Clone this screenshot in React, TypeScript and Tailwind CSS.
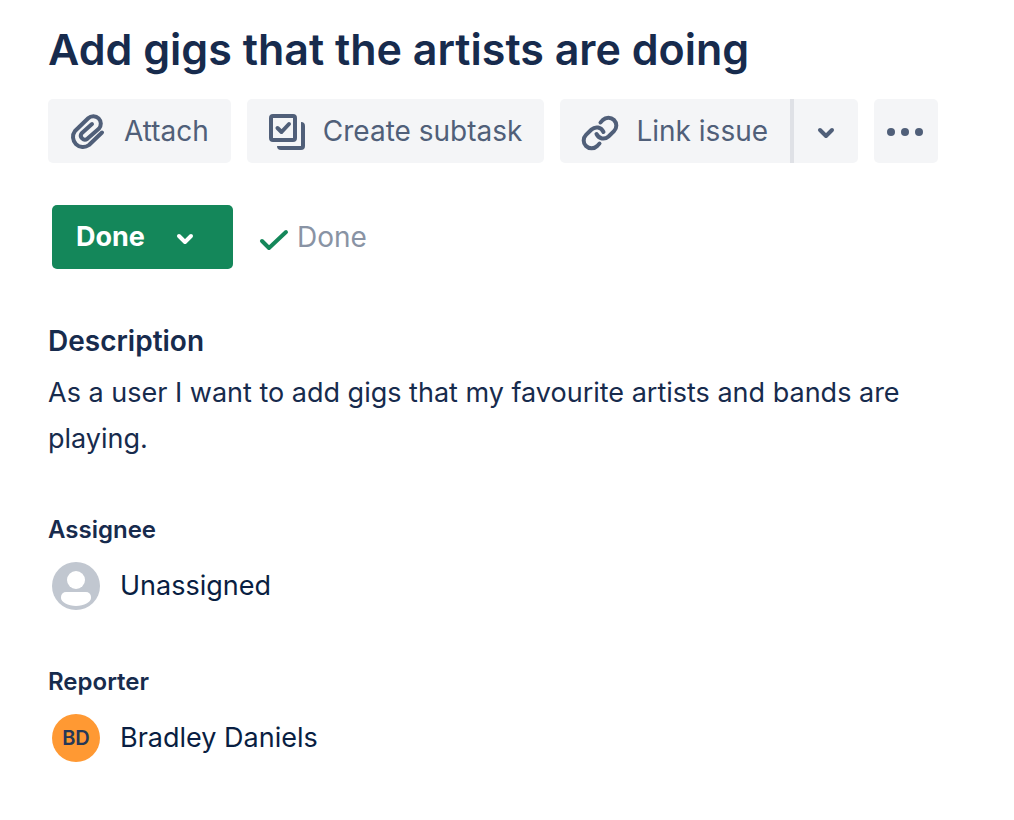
import React from "react";

function Chevron() {
  return (
    <svg className="shrink-0" width="24" height="24" viewBox="0 0 24 24" fill="none" stroke="currentColor" strokeWidth="4" strokeLinecap="round" strokeLinejoin="round" aria-hidden="true">
      <path d="M6 11l6 6 6-6" />
    </svg>
  );
}

function AttachIcon() {
  return (
    <svg className="shrink-0" width="40" height="40" viewBox="0 0 40 40" fill="none" stroke="currentColor" strokeWidth="4" strokeLinecap="round" strokeLinejoin="round" aria-hidden="true">
      <path d="M34 21.5 21 34A10 10 0 0 1 7 20L20.200 7.200A7.500 7.500 0 0 1 30.800 17.800L19.300 27.800A4 4 0 0 1 13.700 22.200L24 13" />
    </svg>
  );
}

function SubtaskIcon() {
  return (
    <svg className="shrink-0" width="40" height="40" viewBox="0 0 40 40" fill="none" stroke="currentColor" strokeWidth="4" strokeLinejoin="round" aria-hidden="true">
      <rect x="4" y="5" width="24" height="24" rx="2" />
      <path d="m10.500 17 4 4 7.500-8" strokeLinecap="round" />
      <path d="M34 11a4 4 0 0 1 4 4v20a4 4 0 0 1-4 4H14a4 4 0 0 1-4-4h24z" fill="currentColor" stroke="none" />
    </svg>
  );
}

function LinkIcon() {
  return (
    <svg className="shrink-0" width="40" height="40" viewBox="0 0 40 40" fill="none" stroke="currentColor" strokeWidth="4" strokeLinecap="round" strokeLinejoin="round" aria-hidden="true">
      <path d="M20.500 11.500l2.300-2.500a7.800 7.800 0 0 1 11.200 11.200l-5.500 5.300c-4 3.500-9.500 2.500-12-2.500" />
      <path d="M19.500 32.500l-2.300 2.500a7.800 7.800 0 0 1-11.200-11.200l5.500-5.300c4-3.500 9.500-2.500 12 2.500" />
    </svg>
  );
}

function MoreIcon() {
  return (
    <svg width="40" height="40" viewBox="0 0 40 40" fill="currentColor" aria-hidden="true">
      <circle cx="5" cy="21" r="4" />
      <circle cx="19" cy="21" r="4" />
      <circle cx="33" cy="21" r="4" />
    </svg>
  );
}

function PersonAvatar() {
  return (
    <svg className="shrink-0" width="48" height="48" viewBox="0 0 48 48" aria-hidden="true">
      <circle cx="24" cy="24" r="24" fill="#c1c7d0" />
      <circle cx="24" cy="18" r="9" fill="#fff" />
      <path d="M14 30h20a5 5 0 0 1 5 5v1c0 4-7 8-15 8S9 40 9 36v-1a5 5 0 0 1 5-5z" fill="#fff" />
    </svg>
  );
}

const tool = "flex h-16 items-center bg-[#f4f5f7] text-[28px] text-[#505f79] hover:bg-[#ebecf0]";
const labelled = "gap-4 pl-5 pr-[22px]";

function Person({ role, name, avatar }: { role: string; name: string; avatar: React.ReactNode }) {
  return (
    <section className="mt-[52px]">
      <h2 className="text-[24px] leading-8 font-semibold">{role}</h2>
      <div className="mt-3 flex h-14 items-center gap-5 pl-1 text-[27px] text-[#091e42]">
        {avatar}
        <span>{name}</span>
      </div>
    </section>
  );
}

export default function App() {
  return (
    <main className="min-h-screen bg-white px-12 pt-6 pb-12 font-['Inter',sans-serif] text-[#172b4d]">
      <h1 className="text-[43px] leading-[50px] font-semibold">Add gigs that the artists are doing</h1>
      <div className="mt-[25px] flex flex-wrap gap-4">
        <button type="button" className={`${tool} ${labelled} rounded-[5px]`}>
          <AttachIcon />
          Attach
        </button>
        <button type="button" className={`${tool} ${labelled} rounded-[5px]`}>
          <SubtaskIcon />
          Create subtask
        </button>
        <div className="flex">
          <button type="button" className={`${tool} ${labelled} rounded-l-[5px]`}>
            <LinkIcon />
            Link issue
          </button>
          <button type="button" aria-label="More link options" className={`${tool} rounded-r-[5px] border-l-4 border-[#dfe1e6] px-5`}>
            <Chevron />
          </button>
        </div>
        <button type="button" aria-label="More actions" className={`${tool} rounded-[5px] px-3`}>
          <MoreIcon />
        </button>
      </div>
      <div className="mt-[42px] flex items-center gap-6 pl-1">
        <button type="button" className="flex h-16 items-center gap-7 rounded-[5px] bg-[#14875a] pr-9 pl-6 text-[27px] font-bold text-white">
          Done
          <Chevron />
        </button>
        <span className="flex items-center gap-2 text-[28px] text-[#8993a4]">
          <svg width="32" height="32" viewBox="0 0 32 32" fill="none" stroke="#14875a" strokeWidth="4" strokeLinecap="round" strokeLinejoin="round" aria-hidden="true">
            <path d="m5 20 7 7L29 11" />
          </svg>
          Done
        </span>
      </div>
      <section className="mt-14">
        <h2 className="text-[28px] leading-8 font-semibold">Description</h2>
        <p className="mt-[13px] text-[27px] leading-[46px]">As a user I want to add gigs that my favourite artists and bands are playing.</p>
      </section>
      <Person role="Assignee" name="Unassigned" avatar={<PersonAvatar />} />
      <Person
        role="Reporter"
        name="Bradley Daniels"
        avatar={<span className="flex size-12 shrink-0 items-center justify-center rounded-full bg-[#ff9933] text-[20px] font-semibold text-[#253858]">BD</span>}
      />
    </main>
  );
}
